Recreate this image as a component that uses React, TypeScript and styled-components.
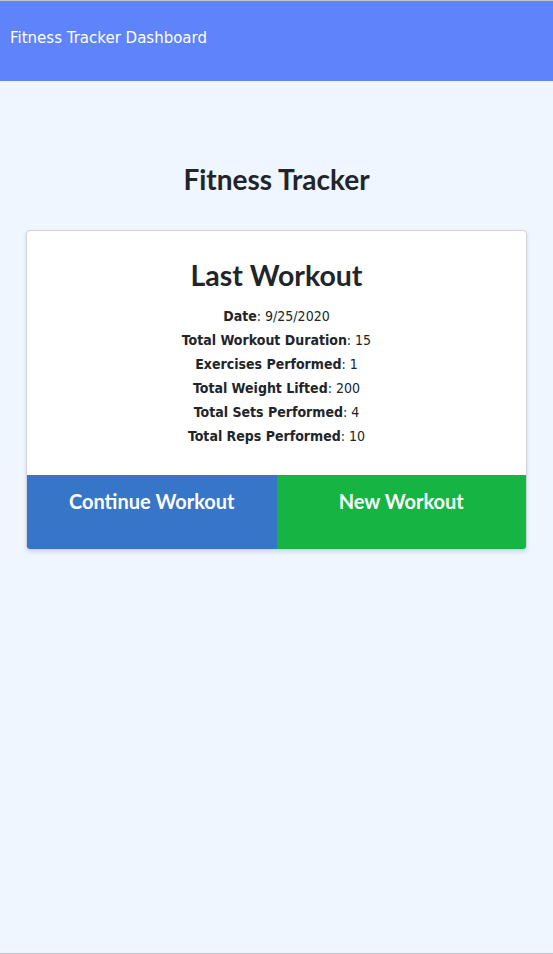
import React from 'react';
import styled, { createGlobalStyle } from 'styled-components';

const GlobalStyle = createGlobalStyle`
  html, body {
    margin: 0;
    padding: 0;
    background: #eff6ff;
  }
  * {
    box-sizing: border-box;
  }
`;

const Page = styled.div`
  min-height: 954px;
  display: flex;
  flex-direction: column;
  border-top: 1px solid #c4c4c4;
  border-bottom: 1px solid #c4c4c4;
  background: #eff6ff;
  color: #212529;
`;

const Header = styled.header`
  height: 80px;
  background: #5f83fa;
  display: flex;
  align-items: center;
  padding: 0 0 6px 10px;
  color: #fff;
  font-family: 'DejaVu Sans', Verdana, sans-serif;
  font-size: 15px;
`;

const Main = styled.main`
  flex: 1;
  display: flex;
  flex-direction: column;
  align-items: center;
  padding: 80px 26px 0 26px;
`;

const Title = styled.h1`
  margin: 0 0 33px;
  font-family: Lato, sans-serif;
  font-weight: 700;
  font-size: 28px;
  line-height: 36px;
`;

const Card = styled.div`
  width: 501px;
  background: #fff;
  border: 1px solid #cfd4da;
  border-radius: 4px;
  overflow: hidden;
  box-shadow: 0 2px 4px rgba(0, 0, 0, 0.12);
`;

const Body = styled.div`
  padding: 27px 20px 27px;
  text-align: center;
`;

const CardTitle = styled.h2`
  margin: 0 0 12px;
  font-family: Lato, sans-serif;
  font-weight: 700;
  font-size: 28.5px;
  line-height: 34px;
`;

const Stat = styled.p`
  margin: 0;
  font-family: 'DejaVu Sans Condensed', 'DejaVu Sans', Verdana, sans-serif;
  font-size: 14px;
  line-height: 24px;

  b {
    font-weight: 700;
  }
`;

const Actions = styled.div`
  display: grid;
  grid-template-columns: 1fr 1fr;
`;

const ActionButton = styled.button<{ $tone: string }>`
  height: 74px;
  border: none;
  margin: 0;
  padding: 13px 0 0;
  display: flex;
  justify-content: center;
  align-items: flex-start;
  background: ${(p) => p.$tone};
  color: #fff;
  font-family: Lato, sans-serif;
  font-weight: 700;
  font-size: 20px;
  line-height: 26px;
  cursor: pointer;
`;

const stats: [string, string][] = [
  ['Date', '9/25/2020'],
  ['Total Workout Duration', '15'],
  ['Exercises Performed', '1'],
  ['Total Weight Lifted', '200'],
  ['Total Sets Performed', '4'],
  ['Total Reps Performed', '10'],
];

const App: React.FC = () => (
  <>
    <GlobalStyle />
    <Page>
      <Header>Fitness Tracker Dashboard</Header>
      <Main>
        <Title>Fitness Tracker</Title>
        <Card>
          <Body>
            <CardTitle>Last Workout</CardTitle>
            {stats.map(([label, value]) => (
              <Stat key={label}>
                <b>{label}</b>: {value}
              </Stat>
            ))}
          </Body>
          <Actions>
            <ActionButton $tone="#3775c8">Continue Workout</ActionButton>
            <ActionButton $tone="#16b443">New Workout</ActionButton>
          </Actions>
        </Card>
      </Main>
    </Page>
  </>
);

export default App;
